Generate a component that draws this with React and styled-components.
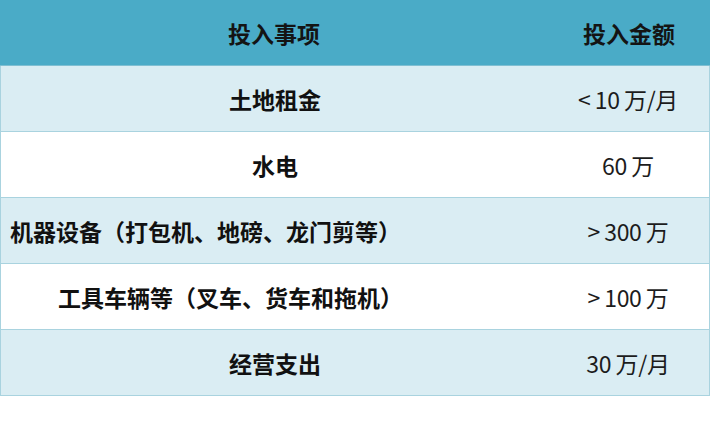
import React from 'react'
import styled, { createGlobalStyle } from 'styled-components'

const GlobalStyle = createGlobalStyle`
  html, body {
    margin: 0;
    padding: 0;
    background: #ffffff;
  }
  body {
    font-family: "Noto Sans CJK SC", "Noto Sans", sans-serif;
  }
`

const rows = [
  { item: '土地租金', amount: '<\u200910\u2009万/月' },
  { item: '水电', amount: '60\u2009万' },
  { item: '机器设备（打包机、地磅、龙门剪等）', amount: '>\u2009300\u2009万', indent: 10 },
  { item: '工具车辆等（叉车、货车和拖机）', amount: '>\u2009100\u2009万', indent: 58 },
  { item: '经营支出', amount: '30\u2009万/月' },
]

const App = () => {
  return (
    <>
      <GlobalStyle />
      <Page>
        <Table>
          <Head>
            <HeadCell>投入事项</HeadCell>
            <HeadCell>投入金额</HeadCell>
          </Head>
          {rows.map((r, i) => (
            <Row key={r.item} $shaded={i % 2 === 0}>
              <ItemCell $indent={r.indent}>{r.item}</ItemCell>
              <AmountCell>{r.amount}</AmountCell>
            </Row>
          ))}
        </Table>
      </Page>
    </>
  )
}

const Page = styled.div`
  width: 717px;
  height: 429px;
  background: #ffffff;
`

const Table = styled.div`
  width: 710px;
  display: flex;
  flex-direction: column;
`

const Head = styled.div`
  display: grid;
  grid-template-columns: 548px 162px;
  height: 66px;
  background: #4aabc7;
  box-sizing: border-box;
  border-bottom: 1px solid #7fbfd2;
`

const HeadCell = styled.div`
  display: flex;
  align-items: center;
  justify-content: center;
  font-size: 23px;
  font-weight: 700;
  color: #141414;
`

const Row = styled.div`
  display: grid;
  grid-template-columns: 548px 162px;
  height: 66px;
  box-sizing: border-box;
  background: ${p => (p.$shaded ? '#daedf3' : '#ffffff')};
  border-left: 1px solid #a9d3df;
  border-right: 1px solid #a9d3df;
  border-bottom: 1px solid #a9d3df;
`

const ItemCell = styled.div`
  display: flex;
  align-items: center;
  justify-content: ${p => (p.$indent != null ? 'flex-start' : 'center')};
  padding-left: ${p => (p.$indent != null ? p.$indent - 1 : 0)}px;
  font-size: 23px;
  font-weight: 700;
  color: #111111;
  white-space: nowrap;
`

const AmountCell = styled.div`
  display: flex;
  align-items: center;
  justify-content: center;
  font-size: 23px;
  font-weight: 400;
  color: #1c1c1c;
  white-space: nowrap;
  letter-spacing: -0.3px;
  padding-right: 4px;
`

export default App
